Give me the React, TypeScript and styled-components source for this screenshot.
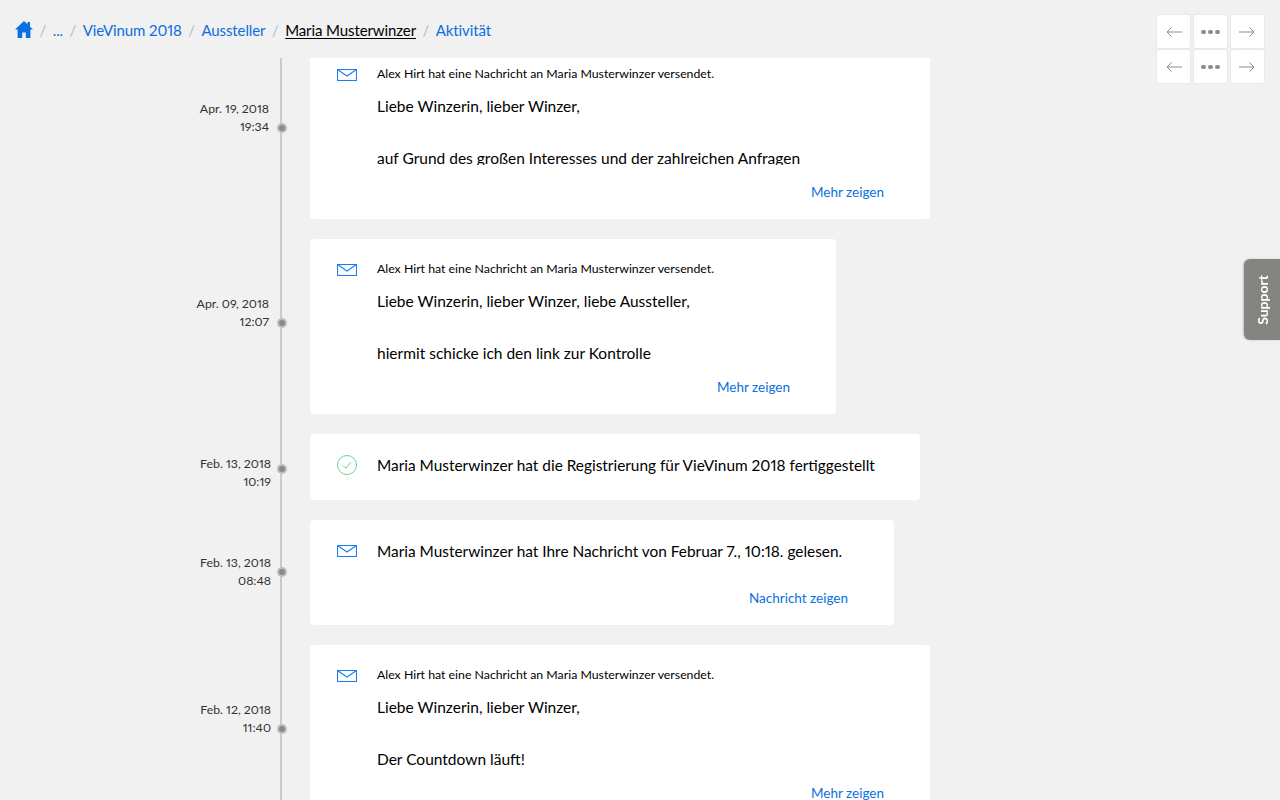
import React from 'react'
import styled, { createGlobalStyle } from 'styled-components'

const GlobalStyle = createGlobalStyle`
  html, body {
    margin: 0;
    height: 100%;
    background: #f1f1f1;
    overflow: hidden;
    font-family: Lato, "Noto Sans", sans-serif;
    font-variant-numeric: proportional-nums;
  }
  #root {
    height: 100%;
  }
  a {
    text-decoration: none;
  }
`

const Page = styled.div`
  height: 800px;
  display: flex;
  flex-direction: column;
  overflow: hidden;
`

const Breadcrumb = styled.nav`
  height: 58px;
  flex: none;
  box-sizing: border-box;
  padding: 20px 0 0 15px;
  display: flex;
  align-items: flex-start;
  font-size: 15px;
  line-height: 21px;
  letter-spacing: -0.1px;
`

const Crumb = styled.a<{ $current?: boolean }>`
  color: ${(p) => (p.$current ? '#000' : '#0a6fe0')};
  text-decoration: ${(p) => (p.$current ? 'underline' : 'none')};
  text-underline-offset: 2px;
`

const Sep = styled.span`
  color: #b5bcc4;
  margin: 0 6.5px;
`

const HomeIcon = styled.svg`
  width: 18px;
  height: 17px;
  margin-top: 1px;
  fill: #0a6fe0;
  display: block;
`

const Timeline = styled.div`
  flex: 1;
  min-height: 0;
  overflow: hidden;
  padding-left: 310px;
  background: linear-gradient(#cbcbcb, #cbcbcb) 280px 0 / 2px 100% no-repeat;
`

const Entries = styled.div`
  margin-top: -14px;
  display: flex;
  flex-direction: column;
  gap: 20px;
`

const Entry = styled.div`
  position: relative;
  display: flex;
`

const Stamp = styled.div<{ $top: number; $right: number }>`
  position: absolute;
  right: calc(100% + ${(p) => p.$right}px);
  top: ${(p) => p.$top}px;
  text-align: right;
  white-space: nowrap;
  font-size: 12.3px;
  line-height: 18px;
  color: #333;
`

const Dot = styled.span<{ $top: number }>`
  position: absolute;
  left: -28px;
  top: ${(p) => p.$top}px;
  width: 6px;
  height: 6px;
  margin: -3px 0 0 -3px;
  border-radius: 50%;
  background: #8a8a8a;
  box-shadow: 0 0 0 2px #bdbdbd;
`

const Card = styled.article<{ $width: number; $height: number }>`
  width: ${(p) => p.$width}px;
  height: ${(p) => p.$height}px;
  box-sizing: border-box;
  background: #fff;
  border-radius: 4px;
  padding-left: 27px;
  padding-right: 46px;
  display: flex;
  flex-direction: column;
`

const CardHead = styled.div`
  display: flex;
  margin-top: 19px;
`

const IconSlot = styled.div`
  width: 40px;
  flex: none;
  display: flex;
  align-items: flex-start;
`

const MailIcon = styled.svg`
  width: 20px;
  height: 12px;
  margin-top: 6px;
  fill: none;
  stroke: #1a80f0;
  stroke-width: 1.1;
`

const CheckIcon = styled.svg`
  width: 20px;
  height: 20px;
  margin-top: 2px;
  fill: none;
  stroke: #6fcf97;
  stroke-width: 1;
`

const Actor = styled.div`
  font-size: 12.3px;
  line-height: 22px;
  color: #000;
`

const Statement = styled.div`
  font-size: 15.4px;
  line-height: 24px;
  color: #000;
  white-space: nowrap;
`

const Excerpt = styled.div`
  margin: 8px 0 0 40px;
  height: 72px;
  overflow: hidden;
  font-size: 15.5px;
  line-height: 26px;
  color: #000;
  white-space: pre-line;
`

const CardFoot = styled.div<{ $top: number }>`
  display: flex;
  justify-content: flex-end;
  margin-top: ${(p) => p.$top}px;
`

const MoreLink = styled.a`
  font-size: 13.5px;
  line-height: 20px;
  color: #0a6fe0;
`

const Pager = styled.div`
  position: absolute;
  top: 15px;
  right: 16px;
  display: grid;
  grid-template-columns: repeat(3, 33px);
  grid-auto-rows: 33px;
  column-gap: 4px;
  row-gap: 2px;
`

const PagerButton = styled.button`
  padding: 1px 0 0;
  border: 0;
  background: #fff;
  border-radius: 2px;
  box-shadow: 0 0 0 1px #e9e9e9;
  display: flex;
  align-items: center;
  justify-content: center;
`

const ArrowIcon = styled.svg`
  width: 16px;
  height: 10px;
  fill: none;
  stroke: #8c8c8c;
  stroke-width: 1;
`

const ForwardIcon = styled(ArrowIcon)`
  margin-right: 2px;
`

const Dots = styled.span`
  display: flex;
  gap: 2.5px;
`

const PagerDot = styled.i`
  width: 4.5px;
  height: 4.5px;
  border-radius: 50%;
  background: #8c8c8c;
`

const SupportTab = styled.a`
  position: fixed;
  right: 0;
  top: 259px;
  width: 36px;
  height: 81px;
  box-sizing: border-box;
  background: #85857f;
  border-radius: 6px 0 0 6px;
  box-shadow: -1px 0 2px rgba(0, 0, 0, 0.2);
  color: #fff;
  font-size: 14px;
  font-weight: 700;
  display: flex;
  align-items: center;
  justify-content: center;
`

const SupportLabel = styled.span`
  writing-mode: vertical-rl;
  transform: rotate(180deg);
`

const Mail = () => (
  <MailIcon viewBox="0 0 20 12">
    <rect x="0.5" y="0.5" width="19" height="11" />
    <path d="M0.5 0.5 10 7l9.5-6.5" />
  </MailIcon>
)

const Check = () => (
  <CheckIcon viewBox="0 0 20 20">
    <circle cx="10" cy="10" r="9.5" />
    <path d="M6 10.5l2.8 2.8L14 7.2" />
  </CheckIcon>
)

const ArrowLeft = () => (
  <ArrowIcon viewBox="0 0 16 10">
    <path d="M16 5H1M5.5.5 1 5l4.5 4.5" />
  </ArrowIcon>
)

const ArrowRight = () => (
  <ForwardIcon viewBox="0 0 16 10">
    <path d="M0 5h15M10.5.5 15 5l-4.5 4.5" />
  </ForwardIcon>
)

const MESSAGE = 'Alex Hirt hat eine Nachricht an Maria Musterwinzer versendet.'

const ENTRIES = [
  { date: 'Apr. 19, 2018', time: '19:34', width: 620, height: 175, stampTop: 56, stampRight: 41, dotTop: 84, mail: true, actor: MESSAGE, text: 'Liebe Winzerin, lieber Winzer,\n\nauf Grund des großen Interesses und der zahlreichen Anfragen', link: 'Mehr zeigen' },
  { date: 'Apr. 09, 2018', time: '12:07', width: 526, height: 175, stampTop: 56, stampRight: 41, dotTop: 84, mail: true, actor: MESSAGE, text: 'Liebe Winzerin, lieber Winzer, liebe Aussteller,\n\nhiermit schicke ich den link zur Kontrolle', link: 'Mehr zeigen' },
  { date: 'Feb. 13, 2018', time: '10:19', width: 610, height: 66, stampTop: 21, stampRight: 39, dotTop: 35, mail: false, statement: 'Maria Musterwinzer hat die Registrierung für VieVinum 2018 fertiggestellt' },
  { date: 'Feb. 13, 2018', time: '08:48', width: 584, height: 105, stampTop: 34, stampRight: 39, dotTop: 52, mail: true, statement: 'Maria Musterwinzer hat Ihre Nachricht von Februar 7., 10:18. gelesen.', link: 'Nachricht zeigen' },
  { date: 'Feb. 12, 2018', time: '11:40', width: 620, height: 175, stampTop: 56, stampRight: 39, dotTop: 84, mail: true, actor: MESSAGE, text: 'Liebe Winzerin, lieber Winzer,\n\nDer Countdown läuft!', link: 'Mehr zeigen' },
]

export default function App() {
  return (
    <Page>
      <GlobalStyle />
      <Breadcrumb>
        <Crumb href="#">
          <HomeIcon viewBox="0 0 18 17">
            <path d="M9 0 0 8.6h2.6V17h4.6v-5.6h3.6V17h4.6V8.6H18l-3-2.9V1h-2.6v2.2z" />
          </HomeIcon>
        </Crumb>
        <Sep>/</Sep>
        <Crumb href="#">...</Crumb>
        <Sep>/</Sep>
        <Crumb href="#">VieVinum 2018</Crumb>
        <Sep>/</Sep>
        <Crumb href="#">Aussteller</Crumb>
        <Sep>/</Sep>
        <Crumb href="#" $current>Maria Musterwinzer</Crumb>
        <Sep>/</Sep>
        <Crumb href="#">Aktivität</Crumb>
      </Breadcrumb>
      <Timeline>
        <Entries>
          {ENTRIES.map((entry) => (
            <Entry key={entry.date + entry.time}>
              <Stamp $top={entry.stampTop} $right={entry.stampRight}>
                {entry.date}
                <br />
                {entry.time}
              </Stamp>
              <Dot $top={entry.dotTop} />
              <Card $width={entry.width} $height={entry.height}>
                <CardHead>
                  <IconSlot>{entry.mail ? <Mail /> : <Check />}</IconSlot>
                  {entry.actor ? <Actor>{entry.actor}</Actor> : <Statement>{entry.statement}</Statement>}
                </CardHead>
                {entry.text && <Excerpt>{entry.text}</Excerpt>}
                {entry.link && (
                  <CardFoot $top={entry.actor ? 17 : 25}>
                    <MoreLink href="#">{entry.link}</MoreLink>
                  </CardFoot>
                )}
              </Card>
            </Entry>
          ))}
        </Entries>
      </Timeline>
      <Pager>
        {[0, 1].map((row) => (
          <React.Fragment key={row}>
            <PagerButton>
              <ArrowLeft />
            </PagerButton>
            <PagerButton>
              <Dots>
                <PagerDot />
                <PagerDot />
                <PagerDot />
              </Dots>
            </PagerButton>
            <PagerButton>
              <ArrowRight />
            </PagerButton>
          </React.Fragment>
        ))}
      </Pager>
      <SupportTab href="#">
        <SupportLabel>Support</SupportLabel>
      </SupportTab>
    </Page>
  )
}
